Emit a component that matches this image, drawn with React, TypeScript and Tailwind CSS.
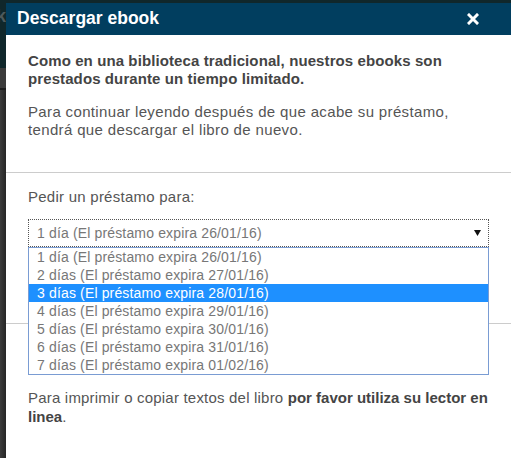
import React from 'react';

const loanOptions = [
  '1 día (El préstamo expira 26/01/16)',
  '2 días (El préstamo expira 27/01/16)',
  '3 días (El préstamo expira 28/01/16)',
  '4 días (El préstamo expira 29/01/16)',
  '5 días (El préstamo expira 30/01/16)',
  '6 días (El préstamo expira 31/01/16)',
  '7 días (El préstamo expira 01/02/16)',
];

const App: React.FC = () => {
  const selected = 2;

  return (
    <div className="flex h-[458px] w-[511px] overflow-hidden bg-[#2e2e2e] font-['Liberation_Sans',Arial,sans-serif]">
      {/* page behind the modal */}
      <div className="flex w-[6px] shrink-0 flex-col">
        <div className="flex h-[68px] justify-end overflow-hidden bg-[#10272b] pt-[7px]">
          <span className="text-[18px] font-bold leading-[18px] text-[#4d5a5c]">k</span>
        </div>
        <div className="h-[20px] bg-[#3b3b3b]" />
        <div className="h-[2px] bg-[#1c1c1c]" />
        <div className="flex-1 bg-gradient-to-r from-[#3c3c3c] to-[#262626]" />
      </div>

      <div className="flex flex-1 flex-col">
        <div className="h-[3px] bg-[#10272b]" />
        <div className="flex-1 bg-white">
          {/* header */}
          <div className="flex h-[32px] items-center justify-between bg-[#013e5f] pl-[11px] pr-[32px]">
            <h1 className="text-[17.5px] font-bold leading-none text-white">Descargar ebook</h1>
            <svg width="12" height="12" viewBox="0 0 12 12">
              <path d="M2 2L10 10M10 2L2 10" stroke="white" strokeWidth="3" strokeLinecap="square" />
            </svg>
          </div>

          {/* intro */}
          <div className="px-[22px] pb-[33px] pt-[17px] text-[15px] leading-[18px]">
            <p className="whitespace-nowrap font-bold tracking-[0.1px] text-[#444]">
              Como en una biblioteca tradicional, nuestros ebooks son
              <br />
              prestados durante un tiempo limitado.
            </p>
            <p className="mt-[15px] whitespace-nowrap tracking-[0.35px] text-[#555]">
              Para continuar leyendo después de que acabe su préstamo,
              <br />
              tendrá que descargar el libro de nuevo.
            </p>
          </div>

          {/* loan select */}
          <div className="border-t border-[#cccccc] px-[22px] pb-[76px] pt-[15px] text-[15px] leading-[18px]">
            <label className="block tracking-[0.25px] text-[#555]">Pedir un préstamo para:</label>
            <div className="relative z-10 mt-[13px] text-[14px] tracking-[0.15px]">
              <div className="flex h-[28px] items-center justify-between border border-dotted border-[#555] pl-[8px] pr-[7px] text-[#777]">
                <span>{loanOptions[0]}</span>
                <svg width="7" height="6" viewBox="0 0 7 6">
                  <path d="M0 0H7L3.5 6Z" fill="#111" />
                </svg>
              </div>
              <ul className="absolute left-0 right-0 top-full border border-[#7a9cd3] bg-white">
                {loanOptions.map((opt, idx) => (
                  <li
                    key={opt}
                    className={`h-[18px] whitespace-nowrap pl-[8px] leading-[18px] ${
                      idx === selected ? 'bg-[#1e90ff] text-white' : 'text-[#777]'
                    }`}
                  >
                    {opt}
                  </li>
                ))}
              </ul>
            </div>
          </div>

          {/* footer note */}
          <div className="border-t border-[#cccccc] px-[22px] pt-[64px] text-[15px] leading-[19px] text-[#555]">
            <p className="whitespace-nowrap">
              <span className="tracking-[0.2px]">Para imprimir o copiar textos del libro </span>
              <b className="text-[#444]">por favor utiliza su lector en</b>
              <br />
              <b className="text-[#444]">linea</b>.
            </p>
          </div>
        </div>
      </div>
    </div>
  );
};

export default App;
